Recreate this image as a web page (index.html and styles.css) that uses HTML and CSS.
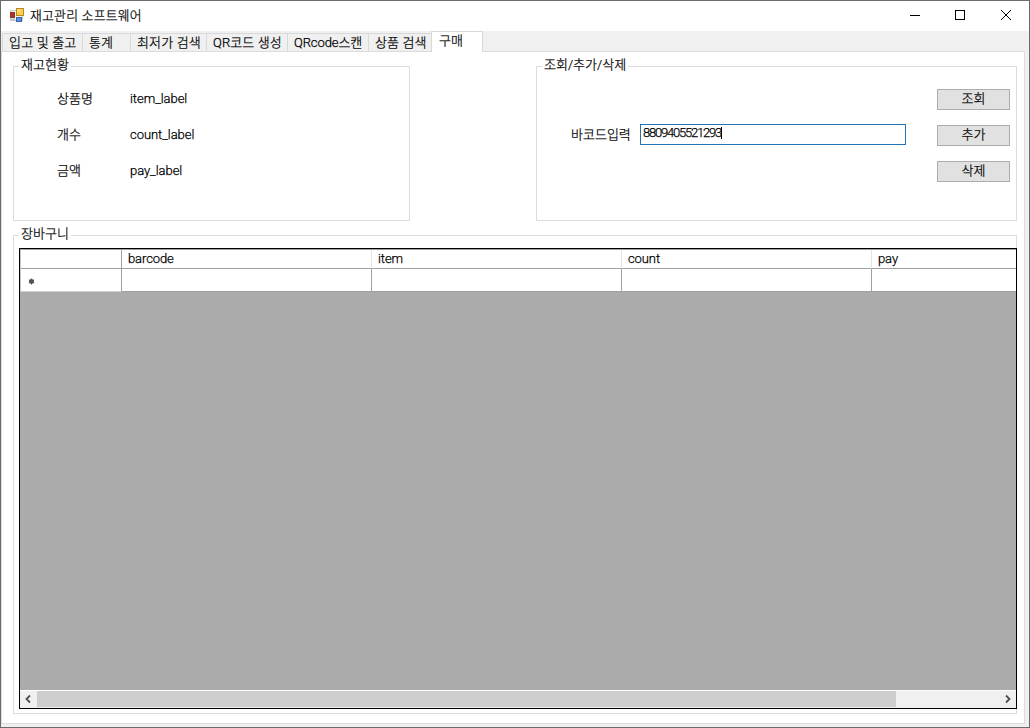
FILE: index.html
```html
<!DOCTYPE html>
<html lang="ko">
<head>
<meta charset="utf-8">
<title>재고관리 소프트웨어</title>
<link rel="stylesheet" href="styles.css">
</head>
<body>
<div class="window">
  <header class="titlebar">
    <svg class="app-icon" width="14" height="14" viewBox="0 0 14 14">
      <rect x="0.5" y="2.5" width="12" height="10" fill="#f4f4f4" stroke="#c9c9c9"/>
      <rect x="0.5" y="4.5" width="4" height="5" fill="#b5301f" stroke="#8e3429"/>
      <rect x="6.5" y="0.5" width="7" height="7" fill="#fbcb4a" stroke="#b98a20"/>
      <rect x="7.5" y="1.5" width="3" height="2" fill="#ffe58e"/>
      <rect x="6.5" y="9.5" width="5" height="4" fill="#5e92dc" stroke="#3768ad"/>
      <path d="M1 10.5h4v2H1z" fill="#b8c6d8"/>
    </svg>
    <span class="title">재고관리 소프트웨어</span>
    <div class="controls">
      <svg width="12" height="12" viewBox="0 0 12 12"><path d="M2 6.5h10" stroke="#000" fill="none"/></svg>
      <svg width="12" height="12" viewBox="0 0 12 12"><rect x="1.5" y="1.5" width="9" height="9" stroke="#000" fill="none"/></svg>
      <svg width="12" height="12" viewBox="0 0 12 12"><path d="M1 1l10 10M11 1L1 11" stroke="#000" fill="none"/></svg>
    </div>
  </header>
  <nav class="tabs">
    <div class="tab tab-1">입고 및 출고</div>
    <div class="tab tab-2">통계</div>
    <div class="tab tab-3">최저가 검색</div>
    <div class="tab tab-4">QR코드 생성</div>
    <div class="tab tab-5">QRcode스캔</div>
    <div class="tab tab-6">상품 검색</div>
    <div class="tab selected">구매</div>
  </nav>
  <main class="page">
    <div class="top-row">
      <section class="group stock">
        <h2 class="legend">재고현황</h2>
        <div class="pair"><span>상품명</span><span class="latin">item_label</span></div>
        <div class="pair"><span>개수</span><span class="latin">count_label</span></div>
        <div class="pair"><span>금액</span><span class="latin">pay_label</span></div>
      </section>
      <section class="group actions">
        <h2 class="legend">조회/추가/삭제</h2>
        <label class="barcode-label">바코드입력</label>
        <div class="field"><span class="digits">8809405521293</span><i class="caret"></i></div>
        <div class="buttons">
          <button>조회</button>
          <button>추가</button>
          <button>삭제</button>
        </div>
      </section>
    </div>
    <section class="group basket">
      <h2 class="legend">장바구니</h2>
      <div class="grid">
        <div class="row head">
          <div></div><div>barcode</div><div>item</div><div>count</div><div>pay</div>
        </div>
        <div class="row new">
          <div><svg width="7" height="7" viewBox="0 0 7 7"><path d="M3.5 .5v6M.8 2l5.4 3M.8 5l5.4-3" stroke="#505050" stroke-width="1"/><circle cx="3.5" cy="3.5" r="2.4" fill="#505050"/></svg></div><div></div><div></div><div></div><div></div>
        </div>
        <div class="empty"></div>
        <div class="scrollbar">
          <svg width="17" height="16" viewBox="0 0 17 16"><path d="M10 4.5L6.5 8l3.500 3.500" fill="none" stroke="#505050" stroke-width="1.8"/></svg>
          <div class="track"><div class="thumb"></div></div>
          <svg width="17" height="16" viewBox="0 0 17 16"><path d="M7 4.5L10.500 8 7 11.500" fill="none" stroke="#505050" stroke-width="1.8"/></svg>
        </div>
      </div>
    </section>
  </main>
</div>
</body>
</html>
```
FILE: styles.css
```css
* { box-sizing: border-box; }
body {
  margin: 0;
  font: 300 13px/16px Roboto, "Noto Sans CJK KR", sans-serif;
  -webkit-text-stroke: 0.25px #000;
  color: #000;
}
.window {
  width: 1030px;
  height: 728px;
  border: 1px solid #6b6b6b;
  background: #f0f0f0;
  display: flex;
  flex-direction: column;
}
.titlebar {
  height: 30px;
  background: #fff;
  display: flex;
  align-items: center;
  padding: 0 17px 2px 9px;
}
.title { margin: 1px 0 0 6px; font-size: 12.9px; letter-spacing: 0.2px; }
.controls { margin-left: auto; display: flex; gap: 34px; }
.controls svg { display: block; }
.tabs {
  height: 20px;
  display: flex;
  align-items: flex-end;
  padding-left: 1px;
  white-space: nowrap;
}
.tab {
  height: 18px;
  border: solid #d9d9d9;
  border-width: 1px 1px 0 0;
  padding-left: 6px;
  line-height: 18px;
}
.tab-1 { width: 81px; border-left-width: 1px; letter-spacing: 0.2px; }
.tab-2 { width: 48px; }
.tab-3 { width: 76px; letter-spacing: 0.15px; }
.tab-4 { width: 81px; letter-spacing: 0.1px; }
.tab-5 { width: 81px; letter-spacing: -0.1px; }
.tab-6 { width: 62px; border-right: 0; letter-spacing: 0.1px; }
.selected {
  width: 52px;
  height: 21px;
  margin-bottom: -1px;
  padding-left: 7px;
  background: #fff;
  border-left-width: 1px;
  position: relative;
}
.page {
  width: 1024px;
  height: 673px;
  background: #fff;
  border: 1px solid #dcdcdc;
  padding: 14px 7px 9px 11px;
}
.top-row { display: flex; justify-content: space-between; }
.group { position: relative; border: 1px solid #dcdcdc; }
.legend {
  position: absolute;
  left: 5px;
  top: -10px;
  margin: 0;
  padding: 0 2px;
  background: #fff;
  font-size: 13px;
  font-weight: 300;
  line-height: 16px;
}
.stock {
  width: 397px;
  height: 155px;
  padding: 24px 0 0 43px;
  display: flex;
  flex-direction: column;
  gap: 20px;
}
.pair { display: grid; grid-template-columns: 73px 1fr; height: 16px; }
.latin { letter-spacing: -0.05px; }
.actions {
  width: 481px;
  height: 155px;
  display: flex;
  align-items: flex-start;
  padding: 22px 6px 0 34px;
}
.barcode-label { width: 69px; margin-top: 38px; }
.field {
  width: 266px;
  height: 21px;
  margin-top: 35px;
  border: 1px solid #2474b5;
  display: flex;
  padding: 0 2px;
}
.digits { font-size: 13px; letter-spacing: -1.22px; line-height: 15px; }
.caret { width: 1px; height: 12px; margin-top: 2px; background: #000; }
.buttons { margin-left: auto; display: flex; flex-direction: column; gap: 15px; }
button {
  width: 73px;
  height: 21px;
  border: 1px solid #adadad;
  background: #e1e1e1;
  padding: 0 0 2px;
  font: inherit;
  line-height: 17px;
  color: #000;
}
.basket { width: 1004px; height: 479px; margin-top: 14px; padding: 12px 0 0 5px; }
.grid {
  width: 998px;
  height: 461px;
  border: 1px solid #000;
  display: flex;
  flex-direction: column;
  background: #fff;
}
.row { display: grid; grid-template-columns: 101px 250px 250px 250px 1fr; }
.row > div { border: solid #a0a0a0; border-width: 0 1px 1px 0; }
.row > div:last-child { border-right: 0; }
.head { height: 20px; border-top: 1px solid #a0a0a0; border-left: 1px solid #c8c8c8; }
.head > div { padding-left: 6px; line-height: 18px; letter-spacing: -0.1px; }
.head > div:nth-child(n+2) { border-right-color: #e3e3e3; }
.new { height: 23px; border-left: 1px solid #c8c8c8; }
.new > div:first-child { padding: 9px 0 0 7px; border-bottom-color: #d0d0d0; }
.new svg { display: block; }
.empty { flex: 1; background: #ababab; }
.scrollbar { height: 18px; display: flex; background: #f0f0f0; border-top: 1px solid #fff; }
.scrollbar svg { display: block; }
.track { flex: 1; }
.thumb { width: 859px; height: 16px; background: #cdcdcd; }
```
